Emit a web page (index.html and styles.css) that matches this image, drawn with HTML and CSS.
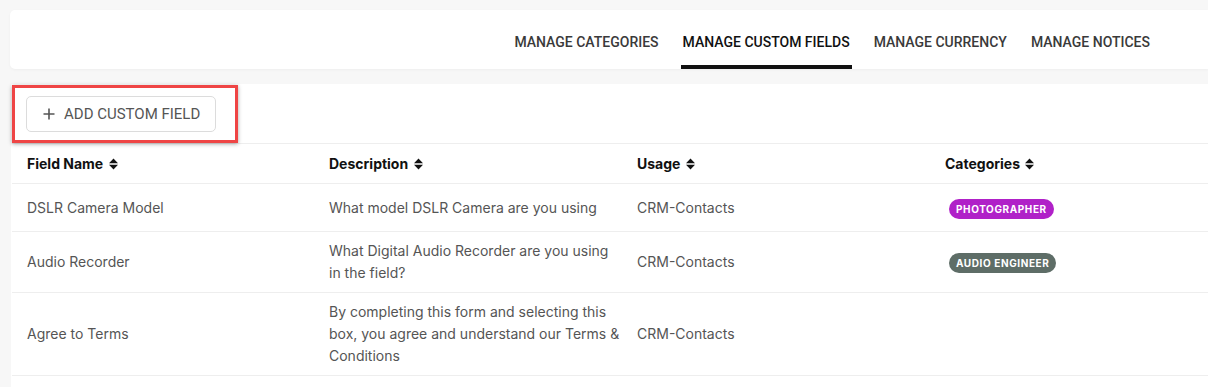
FILE: index.html
```html
<!DOCTYPE html>
<html lang="en">
<head>
    <meta charset="UTF-8">
    <meta name="viewport" content="width=device-width, initial-scale=1.0">
    <title>Custom Fields</title>
    <link rel="stylesheet" href="styles.css">
</head>
<body>
    <div id="page">
        <div class="tabs-card">
            <nav class="tabs">
                <a class="tab">Manage Categories</a>
                <a class="tab active">Manage Custom Fields</a>
                <a class="tab">Manage Currency</a>
                <a class="tab">Manage Notices</a>
            </nav>
        </div>

        <div class="panel">
            <div class="toolbar">
                <div class="highlight">
                    <button class="add-btn">
                        <svg width="12" height="12" viewBox="0 0 12 12"><path d="M6 0.5v11M0.5 6h11" stroke="#555" stroke-width="1.6"/></svg>
                        Add Custom Field
                    </button>
                </div>
            </div>

            <table class="fields">
                <colgroup>
                    <col style="width: 302px">
                    <col style="width: 308px">
                    <col style="width: 308px">
                    <col>
                </colgroup>
                <thead>
                    <tr>
                        <th>Field Name <svg class="sort" width="9" height="12" viewBox="0 0 9 12"><path d="M0 5.2L4.5 0.5L9 5.2Z M0 6.8L9 6.8L4.5 11.5Z" fill="#111"/></svg></th>
                        <th>Description <svg class="sort" width="9" height="12" viewBox="0 0 9 12"><path d="M0 5.2L4.5 0.5L9 5.2Z M0 6.8L9 6.8L4.5 11.5Z" fill="#111"/></svg></th>
                        <th>Usage <svg class="sort" width="9" height="12" viewBox="0 0 9 12"><path d="M0 5.2L4.5 0.5L9 5.2Z M0 6.8L9 6.8L4.5 11.5Z" fill="#111"/></svg></th>
                        <th>Categories <svg class="sort" width="9" height="12" viewBox="0 0 9 12"><path d="M0 5.2L4.5 0.5L9 5.2Z M0 6.8L9 6.8L4.5 11.5Z" fill="#111"/></svg></th>
                    </tr>
                </thead>
                <tbody>
                    <tr>
                        <td>DSLR Camera Model</td>
                        <td>What model DSLR Camera are you using</td>
                        <td>CRM-Contacts</td>
                        <td><span class="badge badge-photo">Photographer</span></td>
                    </tr>
                    <tr>
                        <td>Audio Recorder</td>
                        <td>What Digital Audio Recorder are you using in the field?</td>
                        <td>CRM-Contacts</td>
                        <td><span class="badge badge-audio">Audio Engineer</span></td>
                    </tr>
                    <tr>
                        <td>Agree to Terms</td>
                        <td>By completing this form and selecting this box, you agree and understand our Terms &amp; Conditions</td>
                        <td>CRM-Contacts</td>
                        <td></td>
                    </tr>
                </tbody>
            </table>
        </div>
    </div>
</body>
</html>
```

FILE: styles.css
```css
body {
    margin: 0;
    background-color: #f7f7f7;
    font-family: Inter, "Liberation Sans", sans-serif;
    overflow: hidden;
}
#page {
    padding: 10px 0 0 10px;
}
.tabs-card {
    height: 59px;
    background: white;
    border-radius: 5px 0 0 5px;
    box-shadow: 0 1px 3px rgba(0, 0, 0, 0.04);
}
.tabs {
    display: flex;
    justify-content: flex-end;
    gap: 20px;
    padding-right: 56px;
    height: 100%;
}
.tab {
    box-sizing: border-box;
    height: 59px;
    padding: 24px 2px 0;
    font-family: Roboto, "Liberation Sans", sans-serif;
    font-size: 14px;
    font-weight: 500;
    line-height: 16px;
    text-transform: uppercase;
    color: #3a3a3a;
    border-bottom: 4px solid transparent;
}
.tab.active {
    color: #111;
    border-bottom-color: #111;
}
.panel {
    margin: 15px 0 0 1px;
    background: white;
    min-height: calc(100vh - 84px);
}
.toolbar {
    height: 59px;
    padding: 1px 0 0 1px;
    box-sizing: border-box;
}
.highlight {
    display: inline-block;
    border: 3px solid #ef4545;
    padding: 8px 19px 8px 11px;
    box-shadow: 0 1px 4px rgba(0, 0, 0, 0.35);
}
.add-btn {
    display: flex;
    align-items: center;
    gap: 9px;
    width: 190px;
    height: 36px;
    padding: 0 0 0 16px;
    background: white;
    border: 1px solid #dcdcdc;
    border-radius: 5px;
    font-family: Roboto, "Liberation Sans", sans-serif;
    font-size: 15px;
    text-transform: uppercase;
    color: #555;
}
.fields {
    width: 1232px;
    margin-left: 1px;
    border-collapse: collapse;
    table-layout: fixed;
    font-size: 14px;
}
.fields th {
    height: 39px;
    padding: 0 2px 0 15px;
    text-align: left;
    font-weight: 700;
    color: #111;
    border-top: 1px solid #eee;
    border-bottom: 1px solid #eee;
}
.sort {
    margin-left: 2px;
    vertical-align: -1px;
}
.fields td {
    height: 48px;
    padding: 8px 2px 8px 15px;
    line-height: 22px;
    color: #555;
    border-bottom: 1px solid #eee;
    box-sizing: border-box;
}
.badge {
    display: inline-block;
    margin-left: 4px;
    height: 20px;
    padding: 0 7px;
    border-radius: 10px;
    font-size: 10px;
    font-weight: 700;
    line-height: 20px;
    letter-spacing: 0.6px;
    text-transform: uppercase;
    color: white;
    vertical-align: middle;
}
.badge-photo {
    background-color: #b021c8;
}
.badge-audio {
    background-color: #5e6d67;
}
```
